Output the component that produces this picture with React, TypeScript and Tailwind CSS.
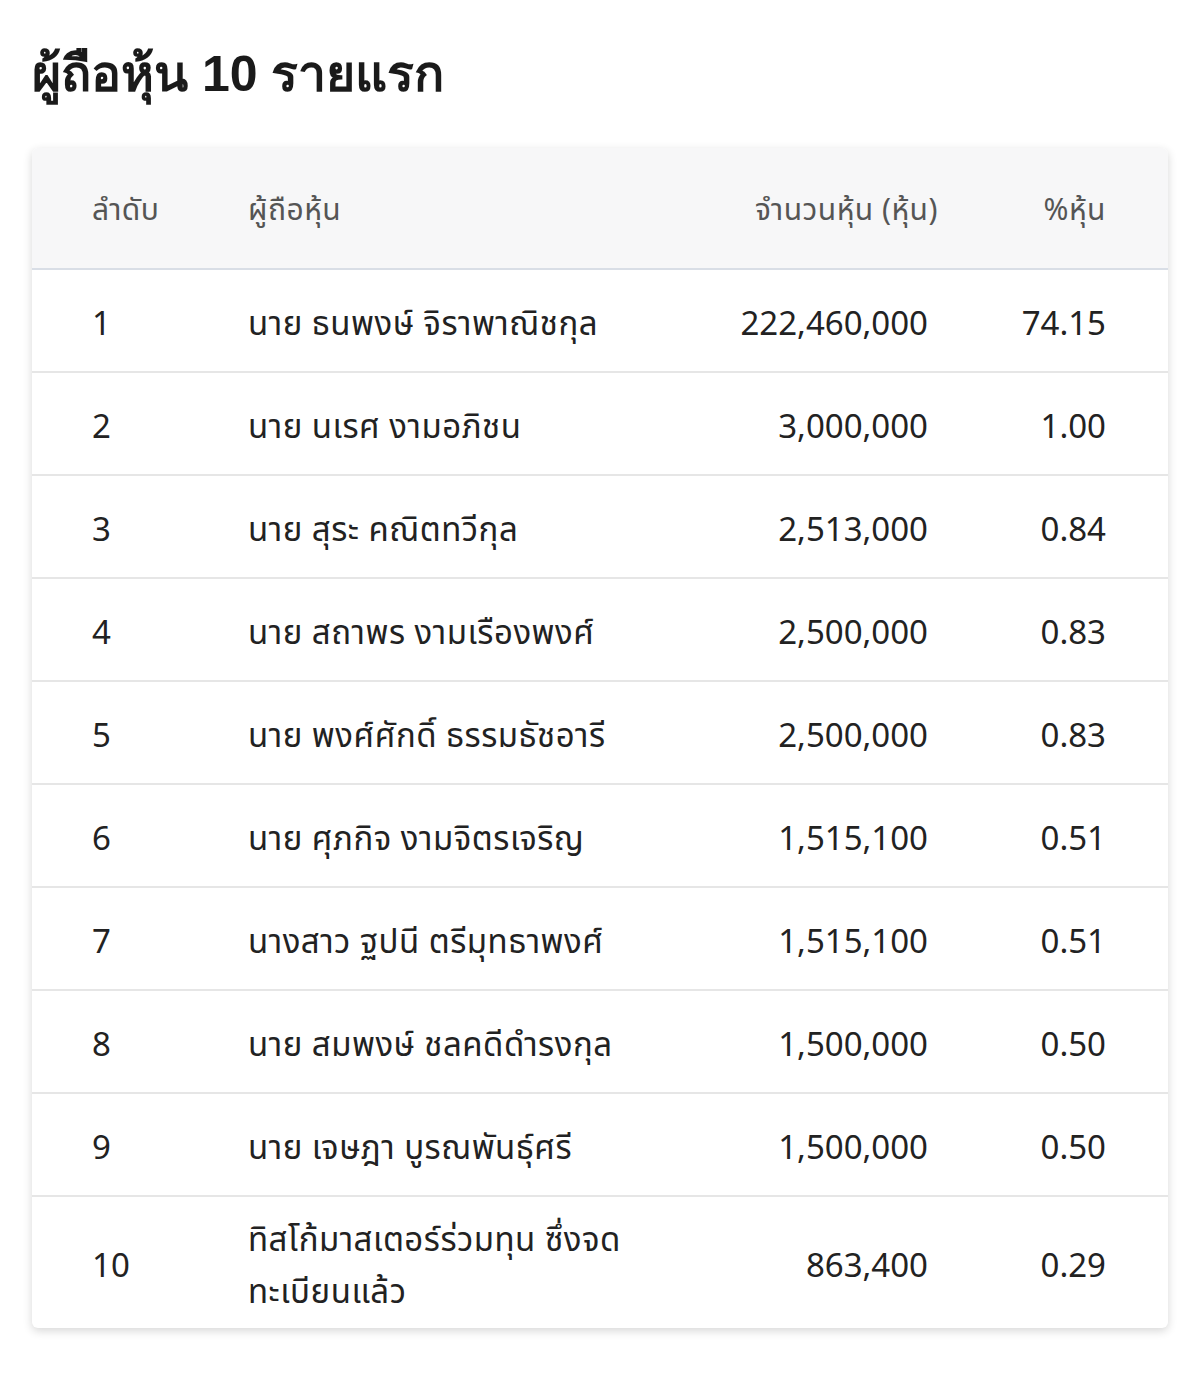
import React from "react";

const rows: [string, string, string, string][] = [
  ["1", "นาย ธนพงษ์ จิราพาณิชกุล", "222,460,000", "74.15"],
  ["2", "นาย นเรศ งามอภิชน", "3,000,000", "1.00"],
  ["3", "นาย สุระ คณิตทวีกุล", "2,513,000", "0.84"],
  ["4", "นาย สถาพร งามเรืองพงศ์", "2,500,000", "0.83"],
  ["5", "นาย พงศ์ศักดิ์ ธรรมธัชอารี", "2,500,000", "0.83"],
  ["6", "นาย ศุภกิจ งามจิตรเจริญ", "1,515,100", "0.51"],
  ["7", "นางสาว ฐปนี ตรีมุทธาพงศ์", "1,515,100", "0.51"],
  ["8", "นาย สมพงษ์ ชลคดีดำรงกุล", "1,500,000", "0.50"],
  ["9", "นาย เจษฎา บูรณพันธุ์ศรี", "1,500,000", "0.50"],
  ["10", "ทิสโก้มาสเตอร์ร่วมทุน ซึ่งจดทะเบียนแล้ว", "863,400", "0.29"],
];

export default function App() {
  return (
    <div
      className="w-[1200px] h-[1376px] bg-white px-8 pt-[44px]"
      style={{ fontFamily: '"Noto Sans", "Noto Sans Thai", "Open Sans", sans-serif' }}
    >
      <h1
        className="text-[50px] font-bold leading-[60px] text-[#1a1a1a] mb-[44px]"
        style={{ fontFamily: '"Liberation Sans", "Noto Sans", sans-serif' }}
      >
        ผู้ถือหุ้น 10 รายแรก
      </h1>
      <div className="rounded-md bg-white shadow-[0_3px_10px_rgba(0,0,0,0.16)] overflow-hidden">
        <div className="grid grid-cols-[216px_420px_270px_1fr] h-[122px] items-center bg-[#f7f7f8] border-b-2 border-[#d9dee6] text-[30px] tracking-[0.5px] text-[#555]">
          <div className="pl-[60px]">ลำดับ</div>
          <div>ผู้ถือหุ้น</div>
          <div className="text-right">จำนวนหุ้น (หุ้น)</div>
          <div className="text-right pr-[62px]">%หุ้น</div>
        </div>
        {rows.map((r, i) => (
          <div
            key={r[0]}
            className={`grid grid-cols-[216px_420px_260px_1fr] items-center text-[33px] text-[#222] pt-[4px] ${
              i === rows.length - 1 ? "h-[131px]" : "h-[103px] border-b-2 border-[#e6e6e6]"
            }`}
          >
            <div className="pl-[60px]">{r[0]}</div>
            <div className="leading-[52px] tracking-[0.5px]">{r[1]}</div>
            <div className="text-right">{r[2]}</div>
            <div className="text-right pr-[62px]">{r[3]}</div>
          </div>
        ))}
      </div>
    </div>
  );
}
